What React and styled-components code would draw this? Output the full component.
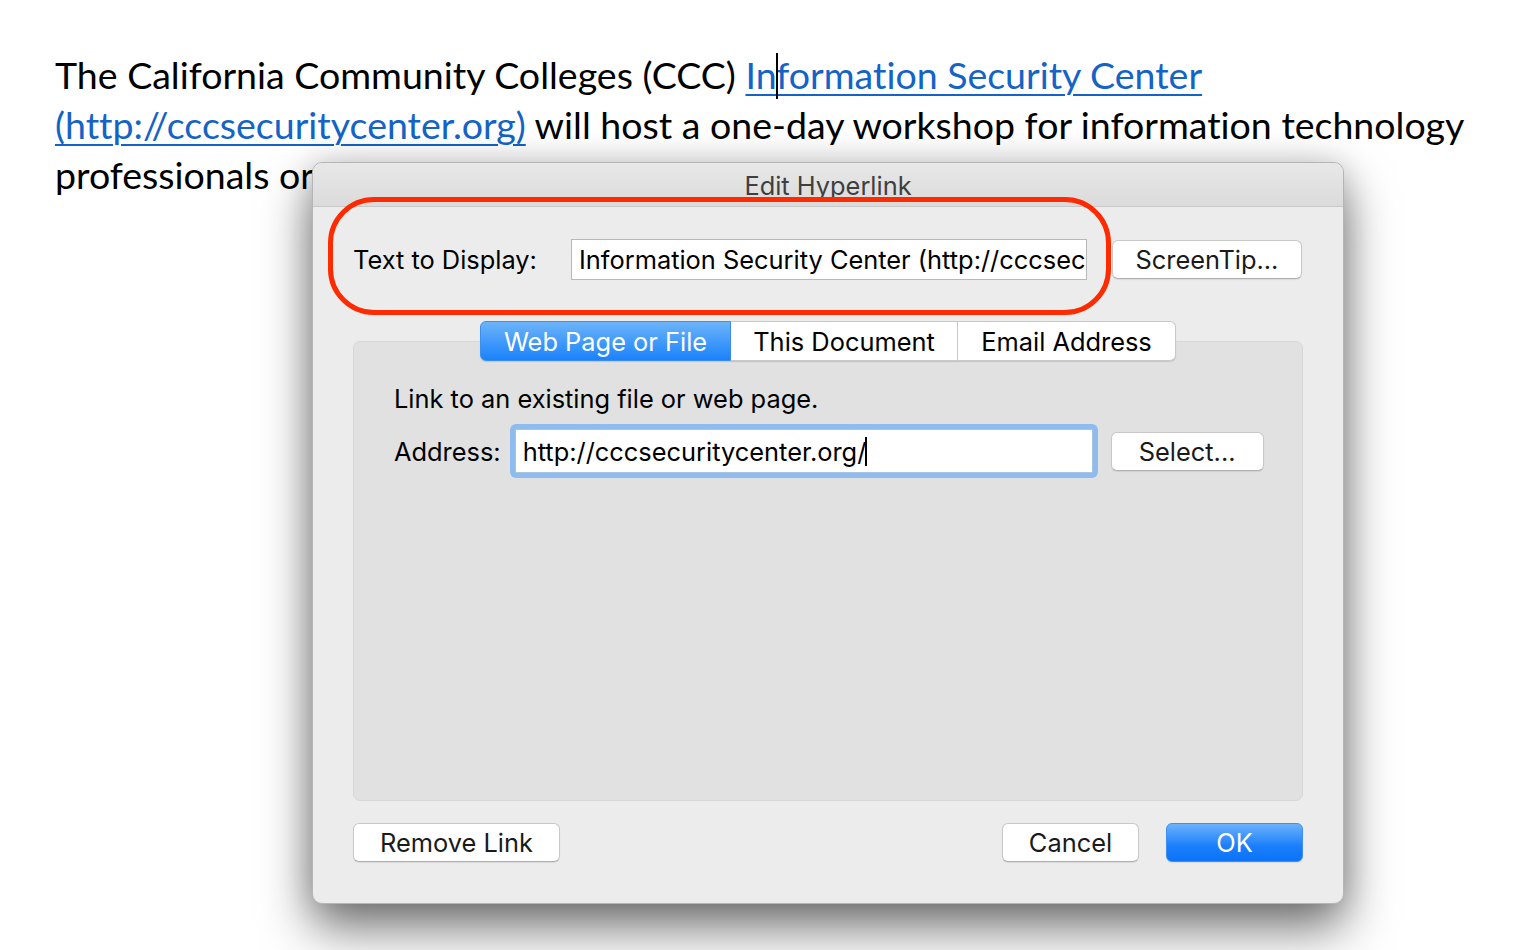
import React from "react";
import styled, { createGlobalStyle } from "styled-components";

const Global = createGlobalStyle`
    html, body {
        margin: 0;
        padding: 0;
        background: #fff;
    }
    body {
        width: 1540px;
        height: 950px;
        overflow: hidden;
    }
`;

const Page = styled.div`
    position: relative;
    width: 1540px;
    height: 950px;
    overflow: hidden;
    background: #fff;
`;

const Doc = styled.p`
    margin: 0;
    padding: 50px 0 0 55px;
    width: 1460px;
    font-family: Lato, "Open Sans", sans-serif;
    font-size: 37.5px;
    font-variant-ligatures: none;
    line-height: 50px;
    color: #000;
`;

const Link = styled.span`
    position: relative;
    color: #1463c6;
    text-decoration: underline;
    text-decoration-thickness: 2px;
    text-underline-offset: 5px;
`;

const Caret = styled.span`
    position: absolute;
    left: ${(p) => p.$left}px;
    top: 1px;
    width: 1.5px;
    height: 46px;
    background: #000;
`;

const Dialog = styled.div`
    position: absolute;
    left: 312px;
    top: 162px;
    width: 1032px;
    height: 742px;
    display: flex;
    flex-direction: column;
    background: #ececec;
    border-radius: 10px;
    border: 1px solid #b5b5b5;
    box-sizing: border-box;
    box-shadow: 0 24px 50px rgba(0, 0, 0, 0.55), 0 0 30px rgba(0, 0, 0, 0.15);
    font-family: Inter, "Liberation Sans", sans-serif;
    font-size: 25.4px;
    color: #000;
    overflow: hidden;
`;

const TitleBar = styled.div`
    height: 44px;
    flex: none;
    display: flex;
    align-items: center;
    justify-content: center;
    background: linear-gradient(#e9e8e9, #dcdbdc);
    border-bottom: 1px solid #c9c9c9;
    color: #3f3f3f;
    font-size: 25.4px;
    line-height: 30px;
    padding-top: 2px;
    box-sizing: border-box;
    overflow: hidden;
`;

const Body = styled.div`
    flex: 1;
    position: relative;
    display: flex;
    flex-direction: column;
    padding: 32px 40px 40px 40px;
`;

const Row = styled.div`
    display: flex;
    align-items: center;
`;

const Label = styled.span`
    width: ${(p) => p.$w || "auto"};
    flex: none;
    white-space: nowrap;
`;

const TextField = styled.div`
    width: 516px;
    height: 41px;
    box-sizing: border-box;
    background: #fff;
    border: 1px solid #b8b8b8;
    padding: 0 0 0 7px;
    display: flex;
    align-items: center;
    white-space: nowrap;
    overflow: hidden;
`;

const Button = styled.button`
    flex: none;
    width: ${(p) => p.$w}px;
    height: 39px;
    margin-left: ${(p) => p.$ml || 0}px;
    box-sizing: border-box;
    border-radius: 6px;
    border: 1px solid #c8c8c8;
    border-bottom-color: #b0b0b0;
    background: ${(p) => (p.$primary ? "linear-gradient(#6cb2fb, #1a7ffb 60%, #0a73fa)" : "#fff")};
    color: ${(p) => (p.$primary ? "#fff" : "#1a1a1a")};
    ${(p) => p.$primary && "border-color: #3f8ff2;"}
    font-family: inherit;
    font-size: 25.4px;
    padding: 0;
    box-shadow: 0 1px 1px rgba(0, 0, 0, 0.08);
`;

const Tabs = styled.div`
    display: flex;
    margin: 41px 0 0 127px;
    position: relative;
    z-index: 1;
`;

const Tab = styled.div`
    height: 40px;
    box-sizing: border-box;
    display: flex;
    align-items: center;
    justify-content: center;
    width: ${(p) => p.$w}px;
    background: ${(p) => (p.$active ? "linear-gradient(#6db4fa, #1a82fb)" : "#fff")};
    color: ${(p) => (p.$active ? "#fff" : "#000")};
    border: 1px solid ${(p) => (p.$active ? "#3e8ef0" : "#c9c9c9")};
    border-left-width: ${(p) => (p.$first ? 1 : 0)}px;
    border-radius: ${(p) => (p.$first ? "6px 0 0 6px" : p.$last ? "0 6px 6px 0" : "0")};
    box-shadow: 0 1px 1px rgba(0, 0, 0, 0.12);
`;

const Panel = styled.div`
    margin-top: -20px;
    height: 460px;
    box-sizing: border-box;
    background: #e1e1e1;
    border: 1px solid #d7d7d7;
    border-radius: 7px;
    padding: 42px 40px 0 40px;
    display: flex;
    flex-direction: column;
`;

const Hint = styled.div`
    line-height: 30px;
`;

const FocusRing = styled.div`
    margin-left: 9px;
    padding: 5px;
    border-radius: 6px;
    background: #8fbcee;
    display: flex;
`;

const AddressField = styled.div`
    width: 578px;
    height: 44px;
    box-sizing: border-box;
    background: #fff;
    border: 1px solid #a9c4e3;
    padding: 0 0 0 7px;
    display: flex;
    align-items: center;
    white-space: nowrap;
`;

const TextCaret = styled.span`
    display: inline-block;
    width: 2px;
    height: 29px;
    background: #000;
    margin-left: -1px;
`;

const Footer = styled.div`
    margin-top: 22px;
    display: flex;
    align-items: center;
`;

const Spacer = styled.div`
    flex: 1;
`;

const Annotation = styled.div`
    position: absolute;
    left: 15px;
    top: -10px;
    width: 783px;
    height: 118px;
    box-sizing: border-box;
    border: 5px solid #fe2a00;
    border-radius: 46px;
    pointer-events: none;
`;

export default function App() {
    return (
        <Page>
            <Global />
            <Doc>
                The California Community Colleges (CCC){" "}
                <Link>
                    Information Security Center
                    <Caret $left={31} />
                </Link>{" "}
                <Link>(http://cccsecuritycenter.org)</Link> will host a one-day workshop for information technology
                professionals or staff who deal with the security of California colleges.
            </Doc>
            <Dialog>
                <TitleBar>Edit Hyperlink</TitleBar>
                <Body>
                    <Annotation />
                    <Row>
                        <Label $w="218px">Text to Display:</Label>
                        <TextField>Information Security Center (http://cccsecuritycenter.org)</TextField>
                        <Button $w={190} $ml={25}>ScreenTip...</Button>
                    </Row>
                    <Tabs>
                        <Tab $w={251} $active $first>Web Page or File</Tab>
                        <Tab $w={227}>This Document</Tab>
                        <Tab $w={218} $last>Email Address</Tab>
                    </Tabs>
                    <Panel>
                        <Hint>Link to an existing file or web page.</Hint>
                        <Row style={{ marginTop: 10 }}>
                            <Label>Address:</Label>
                            <FocusRing>
                                <AddressField>
                                    http://cccsecuritycenter.org/
                                    <TextCaret />
                                </AddressField>
                            </FocusRing>
                            <Button $w={153} $ml={13}>Select...</Button>
                        </Row>
                    </Panel>
                    <Footer>
                        <Button $w={207}>Remove Link</Button>
                        <Spacer />
                        <Button $w={137}>Cancel</Button>
                        <Button $w={137} $ml={27} $primary>OK</Button>
                    </Footer>
                </Body>
            </Dialog>
        </Page>
    );
}
